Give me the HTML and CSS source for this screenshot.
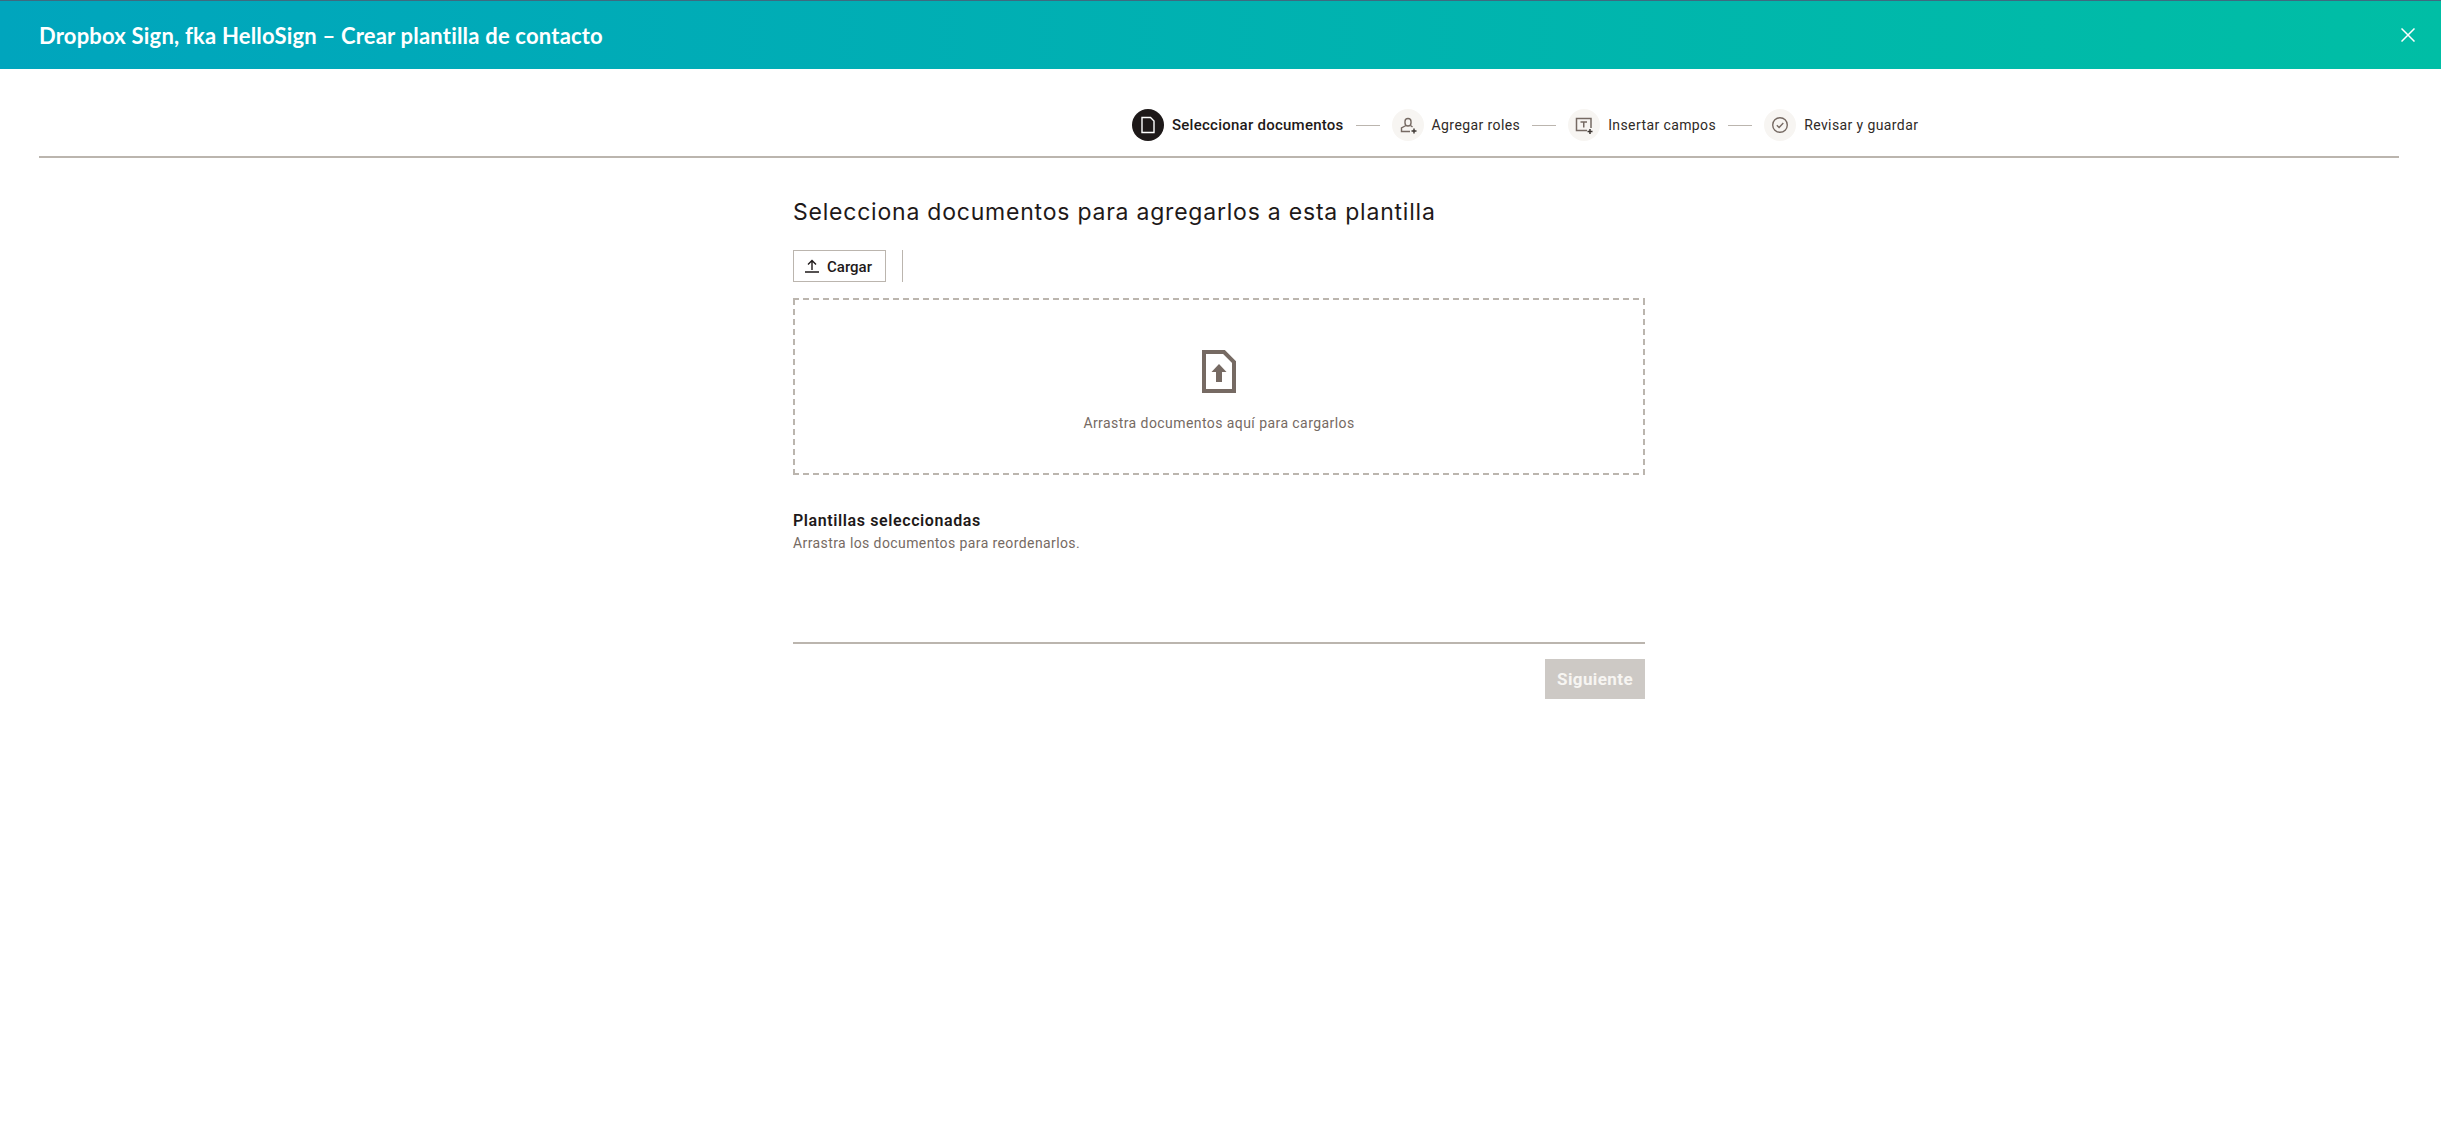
FILE: index.html
```html
<!DOCTYPE html>
<html lang="es">
<head>
    <meta charset="UTF-8">
    <title>Crear plantilla de contacto</title>
    <link rel="stylesheet" href="styles.css">
</head>
<body>
    <header class="topbar">
        <h1>Dropbox Sign, fka HelloSign – Crear plantilla de contacto</h1>
        <button class="close" aria-label="Cerrar">
            <svg width="14" height="14" viewBox="0 0 14 14"><path d="M.5.5l13 13M13.5.5l-13 13" fill="none" stroke="#fff" stroke-width="1.5"/></svg>
        </button>
    </header>

    <div class="wrap">
        <nav class="steps">
            <div class="step active">
                <span class="step-icon">
                    <svg width="16" height="20" viewBox="0 0 16 20"><path d="M2 2.500h8.500l3.500 3.500v11.500H2z" fill="none" stroke="#fff" stroke-width="1.400"/></svg>
                </span>
                <span>Seleccionar documentos</span>
            </div>
            <span class="step-line"></span>
            <div class="step">
                <span class="step-icon">
                    <svg width="20" height="20" viewBox="0 0 20 20"><g fill="none" stroke="#766a63" stroke-width="1.4"><path d="M7 6.500a3 3 0 0 1 6 0v1.500a3 3 0 0 1-6 0z"/><path d="M8 10.500L3.500 13v3.500H12"/><path d="M12.500 10.500L14.500 12"/><path d="M16 13.500v5M13.500 16h5" stroke="#3c3632"/></g></svg>
                </span>
                <span>Agregar roles</span>
            </div>
            <span class="step-line"></span>
            <div class="step">
                <span class="step-icon">
                    <svg width="20" height="20" viewBox="0 0 20 20"><g fill="none" stroke="#766a63" stroke-width="1.5"><path d="M13 15.500H2.500V3.500h14.500v9.500"/><path d="M6.500 7h6.500M9.750 7v5.500"/><path d="M16 14v5M13.500 16.500h5" stroke="#3c3632"/></g></svg>
                </span>
                <span>Insertar campos</span>
            </div>
            <span class="step-line"></span>
            <div class="step">
                <span class="step-icon">
                    <svg width="18" height="18" viewBox="0 0 18 18"><g fill="none" stroke="#766a63" stroke-width="1.4"><circle cx="9" cy="9" r="7.300"/><path d="M5.800 9.200l2.300 2.200 4.200-4.400"/></g></svg>
                </span>
                <span>Revisar y guardar</span>
            </div>
        </nav>

        <main class="content">
            <h2>Selecciona documentos para agregarlos a esta plantilla</h2>

            <div class="toolbar">
                <button class="upload">
                    <svg width="16" height="14" viewBox="0 0 16 14"><path d="M8 11V2M4 5.500L8 1.500l4 4M1 13h14" fill="none" stroke="#1e1919" stroke-width="1.400"/></svg>
                    <span>Cargar</span>
                </button>
                <span class="toolbar-sep"></span>
            </div>

            <div class="dropzone">
                <svg width="34" height="43" viewBox="0 0 34 43"><path d="M2 2h20l10 10v29H2z" fill="none" stroke="#766a63" stroke-width="4"/><path d="M17 14l7.500 8H20v10h-6V22H9.500z" fill="#766a63"/></svg>
                <p>Arrastra documentos aquí para cargarlos</p>
            </div>

            <h3>Plantillas seleccionadas</h3>
            <p class="hint">Arrastra los documentos para reordenarlos.</p>

            <div class="actions">
                <button class="next" disabled>Siguiente</button>
            </div>
        </main>
    </div>
</body>
</html>
```

FILE: styles.css
```css
* {
    margin: 0;
    padding: 0;
    box-sizing: border-box;
}

body {
    background: #fff;
    color: #1e1919;
    font-family: Roboto, "Liberation Sans", sans-serif;
}

.topbar {
    height: 69px;
    border-top: 1px solid #3d6a80;
    padding: 0 26px 0 39px;
    display: flex;
    align-items: center;
    justify-content: space-between;
    background: linear-gradient(90deg, #00a5bd, #00bea5);
}

.topbar h1 {
    font-family: Lato, sans-serif;
    font-size: 22px;
    font-weight: 700;
    color: #fff;
    letter-spacing: 0.2px;
}

.close {
    display: flex;
    background: none;
    border: 0;
}

.wrap {
    margin: 0 42px 0 39px;
}

.steps {
    height: 89px;
    padding: 25px 0 0 1093px;
    border-bottom: 2px solid #bbb5ae;
    display: flex;
    align-items: center;
}

.step {
    display: flex;
    align-items: center;
    gap: 8px;
    font-size: 14px;
    letter-spacing: 0.4px;
    color: #2f2a27;
    white-space: nowrap;
}

.step.active {
    font-size: 15px;
    font-weight: 500;
    letter-spacing: 0.25px;
    color: #1e1919;
}

.step-icon {
    width: 32px;
    height: 32px;
    border-radius: 50%;
    background: #f7f5f2;
    display: flex;
    align-items: center;
    justify-content: center;
}

.step.active .step-icon {
    background: #1e1919;
}

.step-line {
    width: 24px;
    height: 1px;
    margin: 0 12px;
    background: #bbb5ae;
}

.content {
    width: 852px;
    margin: 0 auto;
}

h2 {
    margin-top: 38px;
    font-family: Inter, sans-serif;
    font-size: 23px;
    font-weight: 400;
    line-height: 32px;
    letter-spacing: 0.78px;
}

.toolbar {
    margin-top: 22px;
    display: flex;
    gap: 16px;
}

.upload {
    width: 93px;
    height: 32px;
    border: 1px solid #bbb5ae;
    background: #fff;
    display: flex;
    align-items: center;
    justify-content: center;
    gap: 7px;
    font: 500 15px Roboto, sans-serif;
    color: #1e1919;
}

.upload span {
    padding-top: 2px;
}

.upload svg {
    margin-left: -3px;
}

.toolbar-sep {
    width: 1px;
    background: #bbb5ae;
}

.dropzone {
    margin-top: 16px;
    height: 177px;
    background:
        repeating-linear-gradient(90deg, #bbb5ae 0 6px, transparent 6px 10px) top / 100% 2px no-repeat,
        repeating-linear-gradient(90deg, #bbb5ae 0 6px, transparent 6px 10px) bottom / 100% 2px no-repeat,
        repeating-linear-gradient(0deg, #bbb5ae 0 6px, transparent 6px 10px) left / 2px 100% no-repeat,
        repeating-linear-gradient(0deg, #bbb5ae 0 6px, transparent 6px 10px) right / 2px 100% no-repeat;
    display: flex;
    flex-direction: column;
    align-items: center;
    padding-top: 52px;
}

.dropzone p {
    margin-top: 22px;
    font-size: 14px;
    letter-spacing: 0.43px;
    color: #766a63;
}

h3 {
    margin-top: 36px;
    font-size: 16px;
    font-weight: 600;
    line-height: 20px;
    letter-spacing: 0.6px;
}

.hint {
    margin-top: 2px;
    font-size: 14px;
    line-height: 20px;
    letter-spacing: 0.4px;
    color: #766a63;
}

.actions {
    margin-top: 89px;
    padding-top: 15px;
    border-top: 2px solid #bbb5ae;
    display: flex;
    justify-content: flex-end;
}

.next {
    width: 100px;
    height: 40px;
    border: 0;
    background: #cdc9c5;
    color: #f7f5f2;
    font: 700 17px Roboto, sans-serif;
    letter-spacing: 0.4px;
}
```
